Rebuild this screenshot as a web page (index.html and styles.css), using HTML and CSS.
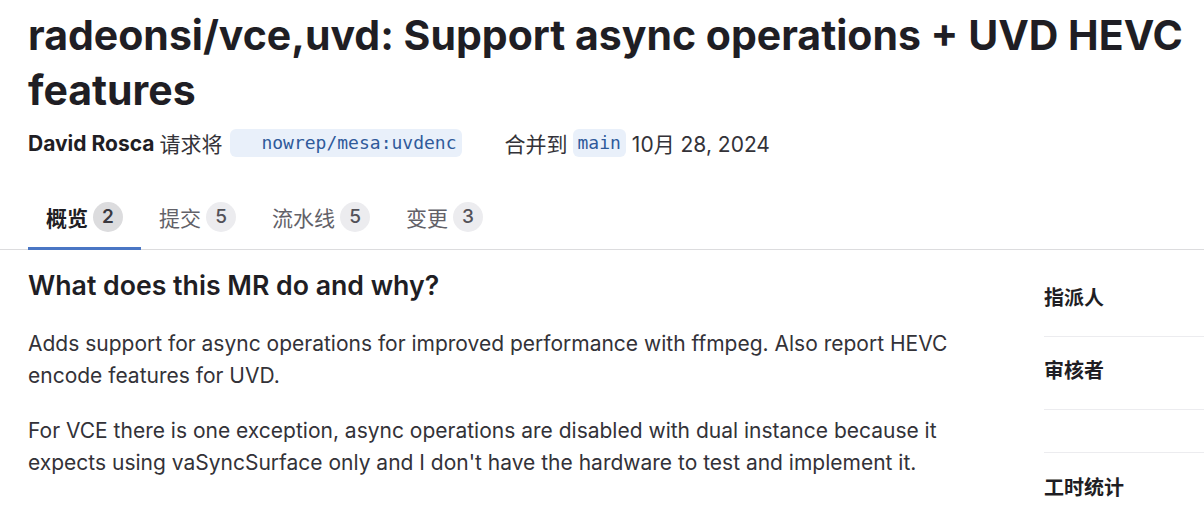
FILE: index.html
```html
<!DOCTYPE html>
<html lang="zh">
<head>
<meta charset="utf-8">
<link rel="stylesheet" href="styles.css">
</head>
<body>
<div class="page">
  <header class="head">
    <h1 class="title">radeonsi/vce,uvd: Support async operations + UVD HEVC features</h1>
    <div class="meta">
      <span class="author">David Rosca</span>
      <span class="cjk">请求将</span>
      <span class="ref ref-src">nowrep/mesa:uvdenc</span>
      <span class="cjk merge">合并到</span>
      <span class="ref">main</span>
      <span class="date">10月 28, 2024</span>
    </div>
  </header>
  <nav class="tabs">
    <a class="tab active">概览<span class="count">2</span></a>
    <a class="tab">提交<span class="count">5</span></a>
    <a class="tab">流水线<span class="count">5</span></a>
    <a class="tab">变更<span class="count">3</span></a>
  </nav>
  <div class="body">
    <article class="desc">
      <h2>What does this MR do and why?</h2>
      <p>Adds support for async operations for improved performance with ffmpeg. Also report HEVC encode features for UVD.</p>
      <p>For VCE there is one exception, async operations are disabled with dual instance because it expects using vaSyncSurface only and I don't have the hardware to test and implement it.</p>
    </article>
    <aside class="side">
      <div class="block">指派人</div>
      <div class="block">审核者</div>
      <div class="block empty"></div>
      <div class="block">工时统计</div>
    </aside>
  </div>
</div>
</body>
</html>
```
FILE: styles.css
```css
* { box-sizing: border-box; }
html, body { margin: 0; padding: 0; background: #fff; }
body {
  font-family: Inter, "Noto Sans CJK SC", sans-serif;
  color: #1f1e24;
  overflow: hidden;
  width: 1204px;
  height: 509px;
}
.page { width: 1204px; }
.head { padding: 0 8px 0 28px; }
.title {
  margin: 8px 0 0;
  font-size: 41px;
  line-height: 55px;
  font-weight: 700;
  color: #1f1e24;
}
.meta {
  display: flex;
  align-items: center;
  margin-top: 10px;
  height: 30px;
  font-size: 21px;
  color: #333238;
}
.author { font-weight: 700; color: #1f1e24; margin-right: 5px; }
.cjk { font-family: "Noto Sans CJK SC", sans-serif; font-weight: 400; }
.ref {
  font-family: "DejaVu Sans Mono", monospace;
  font-size: 18px;
  color: #2f5a9a;
  background: #e9f0fa;
  border-radius: 6px;
  padding: 2px 5px;
  line-height: 24px;
  margin: 0 6px 0 5px;
}
.ref-src { padding-left: 31px; margin-left: 8px; }
.merge { margin-left: 37px; margin-right: 0; }
.date { color: #333238; margin-left: 0; }
.tabs {
  display: flex;
  margin: 26px 0 0;
  padding-left: 28px;
  border-bottom: 1px solid #dcdcde;
  height: 66px;
}
.tab {
  display: flex;
  align-items: center;
  padding: 2px 18px 0;
  font-family: "Noto Sans CJK SC", sans-serif;
  font-size: 21px;
  color: #626168;
  border-bottom: 3px solid transparent;
  margin-bottom: -1px;
}
.tab.active { border-bottom-color: #4a76c4; color: #1f1e24; font-weight: 700; }
.count {
  display: inline-flex;
  align-items: center;
  justify-content: center;
  margin-left: 5px;
  min-width: 30px;
  height: 30px;
  padding: 0 8px;
  border-radius: 15px;
  background: #ececef;
  font-family: Inter, sans-serif;
  font-size: 19px;
  font-weight: 500;
  color: #535158;
}
.tab.active .count { background: #dcdcde; color: #3a383f; font-weight: 600; }
.body { display: flex; padding-left: 28px; }
.desc { width: 984px; color: #333238; }
.desc h2 {
  margin: 17px 0 0;
  font-size: 26.7px;
  line-height: 36px;
  font-weight: 600;
  color: #1f1e24;
}
.desc p {
  margin: 25px 0 0;
  font-size: 21px;
  line-height: 32px;
}
.desc p + p { margin-top: 23px; }
.side { margin-left: 32px; margin-top: 14px; flex: 1; }
.block {
  font-family: "Noto Sans CJK SC", sans-serif;
  font-weight: 700;
  font-size: 20px;
  color: #1f1e24;
  border-bottom: 1px solid #ececef;
  height: 73px;
  padding-top: 19px;
  line-height: 28px;
}
.block.empty { height: 43px; padding-top: 0; }
.block:last-child { border-bottom: 0; padding-top: 20px; }
```
